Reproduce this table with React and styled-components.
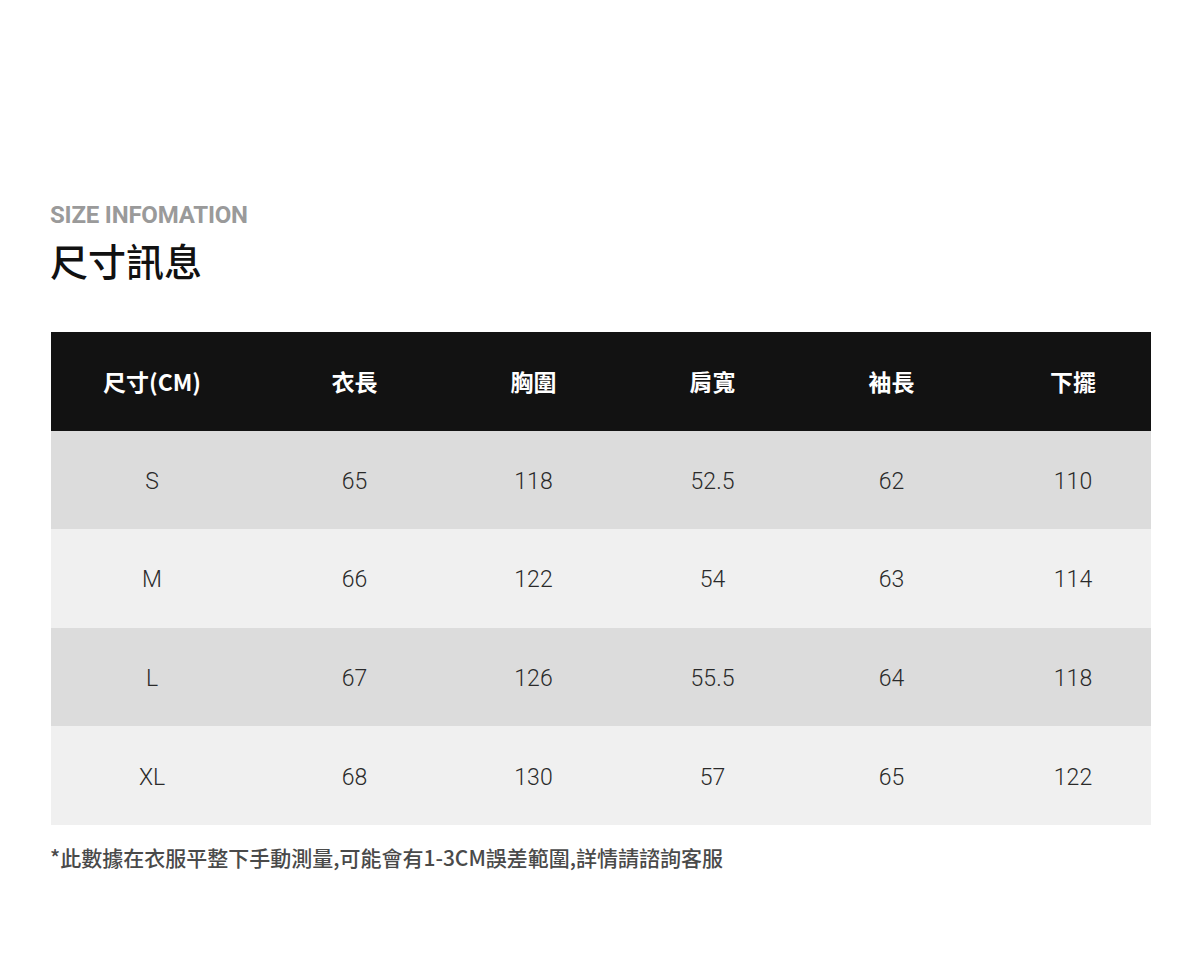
import React from 'react'
import styled, { createGlobalStyle } from 'styled-components';

const GlobalStyle = createGlobalStyle`
    body {
        margin: 0;
        background: #fff;
        font-family: "Noto Sans CJK TC", "Noto Sans", sans-serif;
    }
`;

const Page = styled.div`
    width: 1200px;
    height: 968px;
    padding: 198px 50px 0 50px;
    box-sizing: border-box;
`;

const SubTitle = styled.div`
    font-family: "Roboto", "Noto Sans", sans-serif;
    font-weight: 700;
    font-size: 24px;
    line-height: 34px;
    color: #9a9a9a;
    letter-spacing: -0.2px;
`;

const Title = styled.h1`
    margin: 0;
    font-family: "Noto Sans CJK TC", sans-serif;
    font-weight: 500;
    font-size: 38px;
    line-height: 56px;
    color: #111;
`;

const Table = styled.div`
    margin-top: 44px;
    width: 1100px;
    margin-left: 1px;
`;

const Row = styled.div`
    display: grid;
    grid-template-columns: 214px repeat(4, 179px) 170px;
    width: 1100px;
    overflow: hidden;
    height: 98.6px;
    align-items: center;
    background: ${props => props.bg};
`;

const HeadCell = styled.div`
    text-align: center;
    color: #fff;
    font-family: "Noto Sans CJK TC", sans-serif;
    font-weight: 700;
    font-size: 23px;
    padding-right: ${props => props.pr || 0}px;
    padding-left: ${props => props.pl || 0}px;
`;

const Cell = styled.div`
    text-align: center;
    color: #2a2a2a;
    font-family: "Roboto", "Noto Sans", sans-serif;
    font-weight: 300;
    font-size: 23px;
    padding-top: 3px;
    padding-right: ${props => props.pr || 0}px;
    padding-left: ${props => props.pl || 0}px;
`;

const Note = styled.p`
    margin: 17px 0 0 0;
    font-family: "Noto Sans CJK TC", sans-serif;
    font-weight: 500;
    font-size: 21px;
    color: #4a4a4a;
    letter-spacing: 0;
`;

const headers = ['尺寸(CM)', '衣長', '胸圍', '肩寬', '袖長', '下擺'];

const rows = [
    ['S', '65', '118', '52.5', '62', '110'],
    ['M', '66', '122', '54', '63', '114'],
    ['L', '67', '126', '55.5', '64', '118'],
    ['XL', '68', '130', '57', '65', '122'],
];

const pad = i => (i === 0 ? { pr: 12 } : i === 5 ? { pl: 14 } : {});

export default function App() {
    return (
        <Page>
            <GlobalStyle />
            <SubTitle>SIZE INFOMATION</SubTitle>
            <Title>尺寸訊息</Title>
            <Table>
                <Row bg="#121212">
                    {headers.map((h, i) => (
                        <HeadCell key={h} {...pad(i)}>{h}</HeadCell>
                    ))}
                </Row>
                {rows.map((r, ri) => (
                    <Row key={r[0]} bg={ri % 2 === 0 ? '#dcdcdc' : '#f0f0f0'}>
                        {r.map((c, i) => (
                            <Cell key={i} {...pad(i)}>{c}</Cell>
                        ))}
                    </Row>
                ))}
            </Table>
            <Note>*此數據在衣服平整下手動測量,可能會有1-3CM誤差範圍,詳情請諮詢客服</Note>
        </Page>
    )
}
